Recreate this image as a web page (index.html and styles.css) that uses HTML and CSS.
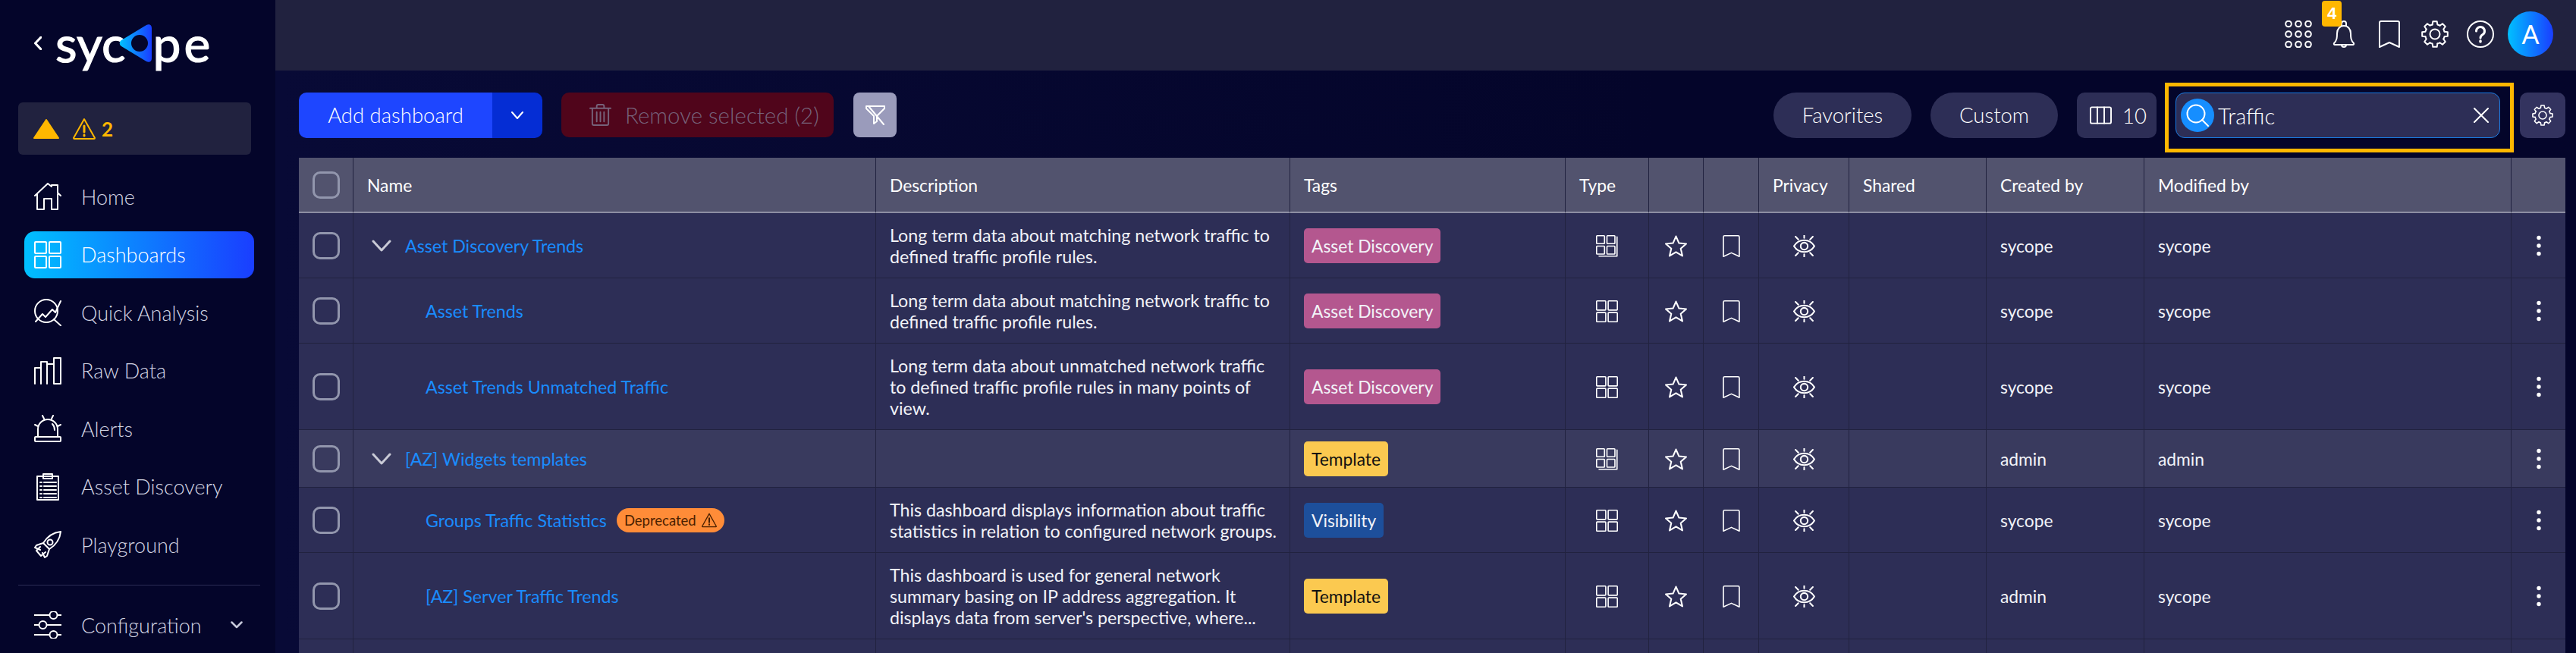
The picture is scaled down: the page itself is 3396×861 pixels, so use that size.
FILE: index.html
```html
<!DOCTYPE html>
<html>
<head>
    <title>Sycope - Dashboards</title>
    <link rel="stylesheet" href="styles.css">
</head>
<body>
    <svg class="icon-defs" width="0" height="0">
        <defs>
            <linearGradient id="logo-grad" x1="0" x2="1" y1="0" y2="0">
                <stop offset="0" stop-color="#00c2ff"/>
                <stop offset="1" stop-color="#1a3cff"/>
            </linearGradient>
            <symbol id="i-home" viewBox="0 0 36 36"><path d="M1 17 18 1l5 4V3h8v10l4 4M4 15v20h9V21h10v14h8V15"/></symbol>
            <symbol id="i-grid" viewBox="0 0 36 36"><rect x="1" y="1" width="15" height="15" rx="1"/><rect x="20" y="1" width="15" height="15" rx="1"/><rect x="1" y="20" width="15" height="15" rx="1"/><rect x="20" y="20" width="15" height="15" rx="1"/></symbol>
            <symbol id="i-stack" viewBox="0 0 36 36"><rect x="1" y="1" width="13" height="13" rx="1"/><rect x="18" y="1" width="13" height="13" rx="1"/><rect x="1" y="18" width="13" height="13" rx="1"/><rect x="18" y="18" width="13" height="13" rx="1"/><path d="M34.500 3v31.500H5"/></symbol>
            <symbol id="i-quick" viewBox="0 0 36 36"><circle cx="16" cy="16" r="15"/><path d="M2 30 11 20l4 4 9-10 4 4 7-15M26 27l10 9"/></symbol>
            <symbol id="i-bars" viewBox="0 0 36 36"><path d="M1 35V14h8v21M9 35V6h8v29M17 35V9h9v26M26 35V1h9v34z"/></symbol>
            <symbol id="i-alert" viewBox="0 0 36 36"><rect x="1" y="29" width="34" height="6" rx="1"/><path d="M5 29V19a13 13 0 0 1 26 0v10M24 12q3 3 3 8M11 1l2 4M25 1l-2 4M1 13l4 2M35 13l-4 2"/></symbol>
            <symbol id="i-clipboard" viewBox="0 0 36 36"><rect x="4" y="4" width="28" height="31"/><rect x="12" y="1" width="12" height="6"/><path d="M8 12h2M13 12h16M8 17h2M13 17h16M8 22h2M13 22h16M8 27h2M13 27h16M8 32h2M13 32h16"/></symbol>
            <symbol id="i-rocket" viewBox="0 0 36 36"><path d="M35 1C25 2 17 8 12 16l8 8c8-5 14-13 15-23zM12 16l-9 3-2 3 7 3M20 24l-3 9-3 2-3-6M8 21l-5 5 6 7 6-5"/><circle cx="21" cy="15" r="3.500"/></symbol>
            <symbol id="i-sliders" viewBox="0 0 36 36"><path d="M0 5h20M31 5h5M0 18h6M17 18h19M0 31h20M31 31h5"/><circle cx="25.500" cy="5" r="5"/><circle cx="11.500" cy="18" r="5"/><circle cx="25.500" cy="31" r="5"/></symbol>
            <symbol id="i-apps" viewBox="0 0 36 36"><circle cx="5" cy="4.500" r="3.800"/><circle cx="18" cy="4.500" r="3.800"/><circle cx="31" cy="4.500" r="3.800"/><circle cx="5" cy="18" r="3.800"/><circle cx="18" cy="18" r="3.800"/><circle cx="31" cy="18" r="3.800"/><circle cx="5" cy="31.500" r="3.800"/><circle cx="18" cy="31.500" r="3.800"/><circle cx="31" cy="31.500" r="3.800"/></symbol>
            <symbol id="i-bell" viewBox="0 0 36 36"><path d="M5 30c4-4 4-8 4-13 0-6 4-10 9-10s9 4 9 10c0 5 0 9 4 13 .5 1 0 2-1 2H6c-1 0-1.500-1-1-2zM15 7V4a3 3 0 0 1 6 0v3M15 32a3 3 0 0 0 6 0"/></symbol>
            <symbol id="i-bookmark" viewBox="0 0 28 36"><path d="M1 35V3a2 2 0 0 1 2-2h22a2 2 0 0 1 2 2v32l-13-6z"/></symbol>
            <path id="gear-tooth" d="M14.640 5.440 15.340 1.200H20.660L21.360 5.440A13 13 0 0 1 24.500 6.740"/>
            <symbol id="i-gear" viewBox="0 0 36 36">
                <use href="#gear-tooth"/><use href="#gear-tooth" transform="rotate(45 18 18)"/><use href="#gear-tooth" transform="rotate(90 18 18)"/><use href="#gear-tooth" transform="rotate(135 18 18)"/><use href="#gear-tooth" transform="rotate(180 18 18)"/><use href="#gear-tooth" transform="rotate(225 18 18)"/><use href="#gear-tooth" transform="rotate(270 18 18)"/><use href="#gear-tooth" transform="rotate(315 18 18)"/>
                <circle cx="18" cy="18" r="6.500"/>
            </symbol>
            <symbol id="i-help" viewBox="0 0 36 36"><circle cx="18" cy="18" r="17"/><path d="M12.500 14a5.500 5.500 0 1 1 8.500 4.600c-2 1.400-3 2.400-3 4.400" stroke-width="3"/><path d="M18 27v1" stroke-width="3.500"/></symbol>
            <symbol id="i-star" viewBox="0 0 28 28"><path d="M14 1.500 17.800 10.200 27 11.100 20 17.200 22.200 26.500 14 21.600 5.800 26.500 8 17.200 1 11.100 10.200 10.200z"/></symbol>
            <symbol id="i-eye" viewBox="0 0 28 28"><path d="M1 14C7 4 21 4 27 14 21 24 7 24 1 14z"/><circle cx="14" cy="14" r="4.500"/><path d="M14 0v3.500M14 24.500V28M3 2l3.500 3.500M25 2l-3.500 3.500M3 26l3.500-3.500M25 26l-3.500-3.500"/></symbol>
            <symbol id="i-warn" viewBox="0 0 30 30"><path d="M15 2 29 27a1 1 0 0 1-1 1H2a1 1 0 0 1-1-1z"/><path d="M15 11v8M15 23v1" stroke-width="3"/></symbol>
            <symbol id="i-down" viewBox="0 0 26 16"><path d="M2 2l11 12L24 2"/></symbol>
            <symbol id="i-more" viewBox="0 0 8 28"><circle cx="4" cy="3.500" r="2.700"/><circle cx="4" cy="14" r="2.700"/><circle cx="4" cy="24.500" r="2.700"/></symbol>
        </defs>
    </svg>

    <aside class="sidebar">
        <div class="logo-row">
            <svg class="logo-back" viewBox="0 0 10 18"><path d="M9 1 1.500 9 9 17"/></svg>
            <div class="logo">
                <span>syc</span>
                <svg class="logo-mark" viewBox="0 0 44 50"><path fill-rule="evenodd" fill="url(#logo-grad)" d="M36 1c4-2 7 0 7 4v40c0 4-3 6-7 4L3 29c-3-2-3-6 0-8zM27 14a11 11 0 1 0 0 22 11 11 0 0 0 0-22z"/></svg>
                <span class="logo-end">pe</span>
            </div>
        </div>

        <div class="alert-box">
            <svg class="alert-solid" viewBox="0 0 34 26"><path d="M17 1 33 25H1z"/></svg>
            <svg class="alert-outline"><use href="#i-warn"/></svg>
            <span class="alert-count">2</span>
        </div>

        <nav class="nav">
            <a class="nav-item"><svg class="nav-icon"><use href="#i-home"/></svg>Home</a>
            <a class="nav-item nav-active"><svg class="nav-icon"><use href="#i-grid"/></svg>Dashboards</a>
            <a class="nav-item"><svg class="nav-icon"><use href="#i-quick"/></svg>Quick Analysis</a>
            <a class="nav-item"><svg class="nav-icon"><use href="#i-bars"/></svg>Raw Data</a>
            <a class="nav-item"><svg class="nav-icon"><use href="#i-alert"/></svg>Alerts</a>
            <a class="nav-item"><svg class="nav-icon"><use href="#i-clipboard"/></svg>Asset Discovery</a>
            <a class="nav-item"><svg class="nav-icon"><use href="#i-rocket"/></svg>Playground</a>
        </nav>
        <div class="nav-divider"></div>
        <a class="nav-item"><svg class="nav-icon"><use href="#i-sliders"/></svg>Configuration
            <svg class="nav-caret" viewBox="0 0 16 10"><path d="M1.500 1.500 8 8l6.500-6.500"/></svg>
        </a>
    </aside>

    <main class="main">
        <header class="topbar">
            <svg class="top-icon"><use href="#i-apps"/></svg>
            <div class="bell-wrap">
                <svg class="top-icon"><use href="#i-bell"/></svg>
                <span class="bell-badge">4</span>
            </div>
            <svg class="top-icon"><use href="#i-bookmark"/></svg>
            <svg class="top-icon"><use href="#i-gear"/></svg>
            <svg class="top-icon"><use href="#i-help"/></svg>
            <div class="avatar">A</div>
        </header>

        <div class="toolbar">
            <div class="btn-split">
                <span class="btn-add">Add dashboard</span>
                <span class="btn-caret"><svg viewBox="0 0 16 10"><path d="M1 1l7 8 7-8"/></svg></span>
            </div>
            <div class="btn-remove">
                <svg class="trash" viewBox="0 0 30 30"><path d="M1 6h28M10 5V3a2 2 0 0 1 2-2h6a2 2 0 0 1 2 2v2M4 6v21a2 2 0 0 0 2 2h18a2 2 0 0 0 2-2V6M10 11v13M15 11v13M20 11v13"/></svg>
                Remove selected (2)
            </div>
            <div class="btn-filter">
                <svg viewBox="0 0 26 26"><path d="M1 1h24v3L15 14v7M1 4l10 10v10l4-3M4 1l20 24M1 1v3"/></svg>
            </div>

            <div class="toolbar-right">
                <span class="pill pill-fav">Favorites</span>
                <span class="pill pill-custom">Custom</span>
                <span class="btn-columns">
                    <svg viewBox="0 0 30 24"><rect x="1" y="1" width="28" height="22" rx="2"/><path d="M10.300 1v22M19.700 1v22"/></svg>
                    10
                </span>
                <div class="highlight">
                    <div class="search">
                        <span class="search-icon"><svg viewBox="0 0 30 30"><circle cx="13" cy="13" r="11.500"/><path d="M21 21l8 8"/></svg></span>
                        <span class="search-value">Traffic</span>
                        <svg class="search-clear" viewBox="0 0 20 20"><path d="M1 1l18 18M19 1 1 19"/></svg>
                    </div>
                </div>
                <span class="btn-settings"><svg><use href="#i-gear"/></svg></span>
            </div>
        </div>

        <table class="grid">
            <colgroup>
                <col class="c-check"><col class="c-name"><col class="c-desc"><col class="c-tags"><col class="c-type"><col class="c-fav"><col class="c-mark"><col class="c-privacy"><col class="c-shared"><col class="c-created"><col class="c-modified"><col class="c-more">
            </colgroup>
            <thead>
                <tr>
                    <th><span class="check"></span></th>
                    <th>Name</th>
                    <th>Description</th>
                    <th>Tags</th>
                    <th>Type</th>
                    <th></th>
                    <th></th>
                    <th>Privacy</th>
                    <th>Shared</th>
                    <th>Created by</th>
                    <th>Modified by</th>
                    <th></th>
                </tr>
            </thead>
            <tbody>
                <tr>
                    <td><span class="check"></span></td>
                    <td><div class="name-group"><svg class="name-caret"><use href="#i-down"/></svg><a class="link">Asset Discovery Trends</a></div></td>
                    <td class="desc">Long term data about matching network traffic to defined traffic profile rules.</td>
                    <td><span class="tag tag-asset">Asset Discovery</span></td>
                    <td class="mid"><svg class="ico"><use href="#i-stack"/></svg></td>
                    <td class="mid"><svg class="ico"><use href="#i-star"/></svg></td>
                    <td class="mid"><svg class="ico"><use href="#i-bookmark"/></svg></td>
                    <td class="mid"><svg class="ico"><use href="#i-eye"/></svg></td>
                    <td></td>
                    <td>sycope</td>
                    <td>sycope</td>
                    <td class="mid"><svg class="more"><use href="#i-more"/></svg></td>
                </tr>
                <tr>
                    <td><span class="check"></span></td>
                    <td><div class="name-child"><a class="link">Asset Trends</a></div></td>
                    <td class="desc">Long term data about matching network traffic to defined traffic profile rules.</td>
                    <td><span class="tag tag-asset">Asset Discovery</span></td>
                    <td class="mid"><svg class="ico"><use href="#i-grid"/></svg></td>
                    <td class="mid"><svg class="ico"><use href="#i-star"/></svg></td>
                    <td class="mid"><svg class="ico"><use href="#i-bookmark"/></svg></td>
                    <td class="mid"><svg class="ico"><use href="#i-eye"/></svg></td>
                    <td></td>
                    <td>sycope</td>
                    <td>sycope</td>
                    <td class="mid"><svg class="more"><use href="#i-more"/></svg></td>
                </tr>
                <tr>
                    <td><span class="check"></span></td>
                    <td><div class="name-child"><a class="link">Asset Trends Unmatched Traffic</a></div></td>
                    <td class="desc">Long term data about unmatched network traffic to defined traffic profile rules in many points of view.</td>
                    <td><span class="tag tag-asset">Asset Discovery</span></td>
                    <td class="mid"><svg class="ico"><use href="#i-grid"/></svg></td>
                    <td class="mid"><svg class="ico"><use href="#i-star"/></svg></td>
                    <td class="mid"><svg class="ico"><use href="#i-bookmark"/></svg></td>
                    <td class="mid"><svg class="ico"><use href="#i-eye"/></svg></td>
                    <td></td>
                    <td>sycope</td>
                    <td>sycope</td>
                    <td class="mid"><svg class="more"><use href="#i-more"/></svg></td>
                </tr>
                <tr class="row-group">
                    <td><span class="check"></span></td>
                    <td><div class="name-group"><svg class="name-caret"><use href="#i-down"/></svg><a class="link">[AZ] Widgets templates</a></div></td>
                    <td class="desc"></td>
                    <td><span class="tag tag-template">Template</span></td>
                    <td class="mid"><svg class="ico"><use href="#i-stack"/></svg></td>
                    <td class="mid"><svg class="ico"><use href="#i-star"/></svg></td>
                    <td class="mid"><svg class="ico"><use href="#i-bookmark"/></svg></td>
                    <td class="mid"><svg class="ico"><use href="#i-eye"/></svg></td>
                    <td></td>
                    <td>admin</td>
                    <td>admin</td>
                    <td class="mid"><svg class="more"><use href="#i-more"/></svg></td>
                </tr>
                <tr>
                    <td><span class="check"></span></td>
                    <td>
                        <div class="name-child">
                            <a class="link">Groups Traffic Statistics</a>
                            <span class="deprecated">Deprecated <svg viewBox="0 0 30 30"><use href="#i-warn"/></svg></span>
                        </div>
                    </td>
                    <td class="desc">This dashboard displays information about traffic statistics in relation to configured network groups.</td>
                    <td><span class="tag tag-visibility">Visibility</span></td>
                    <td class="mid"><svg class="ico"><use href="#i-grid"/></svg></td>
                    <td class="mid"><svg class="ico"><use href="#i-star"/></svg></td>
                    <td class="mid"><svg class="ico"><use href="#i-bookmark"/></svg></td>
                    <td class="mid"><svg class="ico"><use href="#i-eye"/></svg></td>
                    <td></td>
                    <td>sycope</td>
                    <td>sycope</td>
                    <td class="mid"><svg class="more"><use href="#i-more"/></svg></td>
                </tr>
                <tr>
                    <td><span class="check"></span></td>
                    <td><div class="name-child"><a class="link">[AZ] Server Traffic Trends</a></div></td>
                    <td class="desc">This dashboard is used for general network summary basing on IP address aggregation. It displays data from server's perspective, where...</td>
                    <td><span class="tag tag-template">Template</span></td>
                    <td class="mid"><svg class="ico"><use href="#i-grid"/></svg></td>
                    <td class="mid"><svg class="ico"><use href="#i-star"/></svg></td>
                    <td class="mid"><svg class="ico"><use href="#i-bookmark"/></svg></td>
                    <td class="mid"><svg class="ico"><use href="#i-eye"/></svg></td>
                    <td></td>
                    <td>admin</td>
                    <td>sycope</td>
                    <td class="mid"><svg class="more"><use href="#i-more"/></svg></td>
                </tr>
                <tr class="row-cut">
                    <td></td><td></td><td></td><td></td><td></td><td></td><td></td><td></td><td></td><td></td><td></td><td></td>
                </tr>
            </tbody>
        </table>
    </main>
</body>
</html>
```

FILE: styles.css
```css
body {
    margin: 0;
    height: 100vh;
    display: flex;
    overflow: hidden;
    background-color: #05062a;
    font-family: "Lato", "Liberation Sans", sans-serif;
    color: #fff;
}

svg {
    fill: none;
    stroke: #fff;
    stroke-width: 2;
    stroke-linejoin: round;
    stroke-linecap: round;
}

.icon-defs {
    position: absolute;
}

/* Sidebar */
.sidebar {
    flex: 0 0 363px;
    box-sizing: border-box;
    padding: 0 20px 0 24px;
    background-color: #04052a;
}

.logo-row {
    display: flex;
    align-items: center;
    height: 135px;
    padding: 0 0 21px 21px;
    box-sizing: border-box;
}

.logo-back {
    width: 10px;
    height: 18px;
    margin-right: 18px;
    stroke-width: 3;
}

.logo {
    display: flex;
    align-items: center;
    font-size: 66px;
    font-weight: 400;
    line-height: 60px;
    -webkit-text-stroke: 1.2px #fff;
}

.logo-mark {
    width: 44px;
    height: 50px;
    margin: 0 1px 0 -9px;
    stroke: none;
}

.logo-end {
    letter-spacing: 4px;
}

.alert-box {
    display: flex;
    align-items: center;
    width: 307px;
    height: 69px;
    box-sizing: border-box;
    padding-left: 20px;
    background-color: #21223f;
    border-radius: 6px;
}

.alert-solid {
    width: 34px;
    height: 26px;
    fill: #ffb700;
    stroke: #ffb700;
    margin-right: 18px;
}

.alert-outline {
    width: 30px;
    height: 30px;
    stroke: #ffb700;
    margin-right: 8px;
}

.alert-count {
    font-size: 26px;
    font-weight: 700;
    color: #ffb700;
}

.nav {
    display: flex;
    flex-direction: column;
    gap: 14.500px;
    margin-top: 24px;
}

.nav-item {
    display: flex;
    align-items: center;
    width: 303px;
    height: 62px;
    margin-left: 8px;
    box-sizing: border-box;
    padding-left: 13px;
    border-radius: 14px;
    font-size: 27px;
    font-weight: 300;
    color: #d3d5e4;
}

.nav-active {
    background: linear-gradient(90deg, #00c0ff, #1a3eff);
    color: #fff;
}

.nav-icon {
    width: 36px;
    height: 36px;
    margin-right: 26px;
    flex: none;
}

.nav-caret {
    width: 16px;
    height: 10px;
    margin-left: auto;
    margin-right: 15px;
    stroke: #c6c8da;
    stroke-width: 2.500;
}

.nav-divider {
    width: 319px;
    height: 1px;
    margin: 22px 0 21px;
    background-color: #2b2c55;
}

/* Main column */
.main {
    flex: 1;
    min-width: 0;
    background: linear-gradient(90deg, #080a36, #04052a 60%);
}

.topbar {
    display: flex;
    align-items: center;
    justify-content: flex-end;
    gap: 24px;
    height: 93px;
    box-sizing: border-box;
    padding: 0 30px 3px 0;
    background-color: #21223f;
}

.top-icon {
    display: block;
    width: 36px;
    height: 36px;
}

.bell-wrap {
    position: relative;
}

.bell-badge {
    position: absolute;
    left: -11px;
    top: -26px;
    width: 26px;
    height: 34px;
    border-radius: 4px;
    background-color: #ffb700;
    font-family: "Liberation Sans", sans-serif;
    font-size: 22px;
    font-weight: 700;
    line-height: 34px;
    text-align: center;
}

.avatar {
    width: 60px;
    height: 60px;
    margin-left: -6px;
    border-radius: 50%;
    background: linear-gradient(90deg, #00c0ff, #1a3eff);
    font-size: 34px;
    line-height: 60px;
    text-align: center;
}

/* Toolbar */
.toolbar {
    display: flex;
    align-items: flex-start;
    gap: 25px;
    height: 115px;
    box-sizing: border-box;
    padding: 16px 14px 0 31px;
    font-size: 27.500px;
    font-weight: 300;
}

.btn-split {
    display: flex;
    height: 60px;
    margin-top: 13px;
    border-radius: 10px;
    overflow: hidden;
}

.btn-add {
    width: 255px;
    background-color: #1e46ff;
    line-height: 60px;
    text-align: center;
}

.btn-caret {
    display: flex;
    align-items: center;
    justify-content: center;
    width: 66px;
    background-color: #052dd4;
}

.btn-caret svg {
    width: 16px;
    height: 10px;
}

.btn-remove {
    display: flex;
    align-items: center;
    gap: 18px;
    width: 359px;
    height: 59px;
    margin-top: 13px;
    box-sizing: border-box;
    padding-left: 37px;
    background-color: #50051b;
    border-radius: 10px;
    font-size: 29.500px;
    color: #76627a;
}

.trash {
    width: 29px;
    height: 29px;
    stroke: #76627a;
}

.btn-filter {
    display: flex;
    align-items: center;
    justify-content: center;
    width: 57px;
    height: 59px;
    margin: 13px 0 0 1px;
    background-color: #9a9bbb;
    border-radius: 8px;
}

.btn-filter svg {
    width: 26px;
    height: 26px;
}

.toolbar-right {
    display: flex;
    align-items: flex-start;
    margin-left: auto;
}

.pill {
    height: 60px;
    margin-top: 13px;
    background-color: #2d2e56;
    border-radius: 30px;
    line-height: 60px;
    text-align: center;
}

.pill-fav {
    width: 182px;
    margin-right: 25px;
}

.pill-custom {
    width: 168px;
    margin-right: 25px;
}

.btn-columns {
    display: flex;
    align-items: center;
    gap: 14px;
    width: 105px;
    height: 60px;
    margin: 13px 11px 0 0;
    box-sizing: border-box;
    padding-left: 17px;
    background-color: #2d2e56;
    border-radius: 10px;
}

.btn-columns svg {
    width: 29px;
    height: 24px;
}

.highlight {
    width: 460px;
    height: 92px;
    box-sizing: border-box;
    border: 5px solid #ffb700;
    padding: 8px 13px 0 9px;
}

.search {
    display: flex;
    align-items: center;
    height: 60px;
    box-sizing: border-box;
    padding: 0 14px 0 6px;
    background-color: #2d2e56;
    border: 1px solid #1a7ae0;
    border-radius: 12px;
}

.search-icon {
    display: flex;
    align-items: center;
    justify-content: center;
    width: 44px;
    height: 44px;
    background-color: #168eff;
    border-radius: 50%;
}

.search-icon svg {
    width: 30px;
    height: 30px;
}

.search-value {
    margin-left: 5px;
    font-size: 29px;
}

.search-clear {
    width: 20px;
    height: 20px;
    margin-left: auto;
}

.btn-settings {
    display: flex;
    align-items: center;
    justify-content: center;
    width: 60px;
    height: 60px;
    margin: 13px 0 0 8px;
    background-color: #33335f;
    border-radius: 10px;
}

.btn-settings svg {
    width: 28px;
    height: 28px;
}

/* Table */
.grid {
    width: 2988px;
    margin-left: 31px;
    table-layout: fixed;
    border-collapse: separate;
    border-spacing: 0;
    font-size: 22.800px;
}

.c-check { width: 71px; }
.c-name { width: 689px; }
.c-desc { width: 546px; }
.c-tags { width: 363px; }
.c-type { width: 110px; }
.c-fav { width: 72px; }
.c-mark { width: 73px; }
.c-privacy { width: 119px; }
.c-shared { width: 181px; }
.c-created { width: 208px; }
.c-modified { width: 484px; }
.c-more { width: 72px; }

.grid th {
    height: 71px;
    padding: 0 18px;
    background-color: #52536e;
    border-left: 1px solid #21223f;
    border-bottom: 2px solid #8d8ea3;
    font-weight: 400;
    text-align: left;
}

.grid td {
    padding: 15px 18px 14px;
    background-color: #2d2e56;
    border-left: 1px solid #21223f;
    border-bottom: 1px solid #21223f;
    line-height: 28px;
    color: #f2f3f8;
}

.grid th:first-child,
.grid td:first-child {
    padding: 0;
    border-left: 0;
    text-align: center;
}

.grid .row-group td {
    background-color: #393a5e;
}

.grid .row-cut td {
    height: 19px;
    padding-top: 0;
    padding-bottom: 0;
    border-bottom: 0;
}

.grid .mid {
    padding-left: 0;
    padding-right: 0;
    text-align: center;
}

.grid .desc {
    padding-right: 8px;
    font-size: 23.200px;
}

.check {
    display: block;
    width: 36px;
    height: 36px;
    margin: 0 auto;
    box-sizing: border-box;
    border: 3px solid #9296ad;
    border-radius: 10px;
}

.name-group {
    display: flex;
    align-items: center;
    padding-left: 6px;
}

.name-caret {
    width: 26px;
    height: 16px;
    margin-right: 18px;
    stroke: #c9cad6;
    stroke-width: 3;
}

.name-child {
    display: flex;
    align-items: center;
    padding-left: 77px;
}

.link {
    color: #1a8cff;
    font-size: 23.200px;
}

.deprecated {
    display: flex;
    align-items: center;
    gap: 7px;
    height: 32px;
    margin-left: 13px;
    padding: 0 10px;
    background-color: #ff8c38;
    border-radius: 16px;
    font-size: 18.500px;
    color: #4a2000;
}

.deprecated svg {
    width: 20px;
    height: 22px;
    stroke: #4a2000;
}

.tag {
    display: inline-block;
    height: 46px;
    padding: 0 10px;
    border-radius: 5px;
    line-height: 46px;
    vertical-align: middle;
}

.tag-asset {
    background-color: #b4578f;
}

.tag-template {
    background-color: #fbc950;
    color: #111;
}

.tag-visibility {
    background-color: #1d4f9b;
}

.ico {
    display: block;
    width: 29px;
    height: 29px;
    margin: 0 auto;
}

.more {
    display: block;
    width: 8px;
    height: 28px;
    margin: 0 auto;
    fill: #fff;
    stroke: none;
}
```
